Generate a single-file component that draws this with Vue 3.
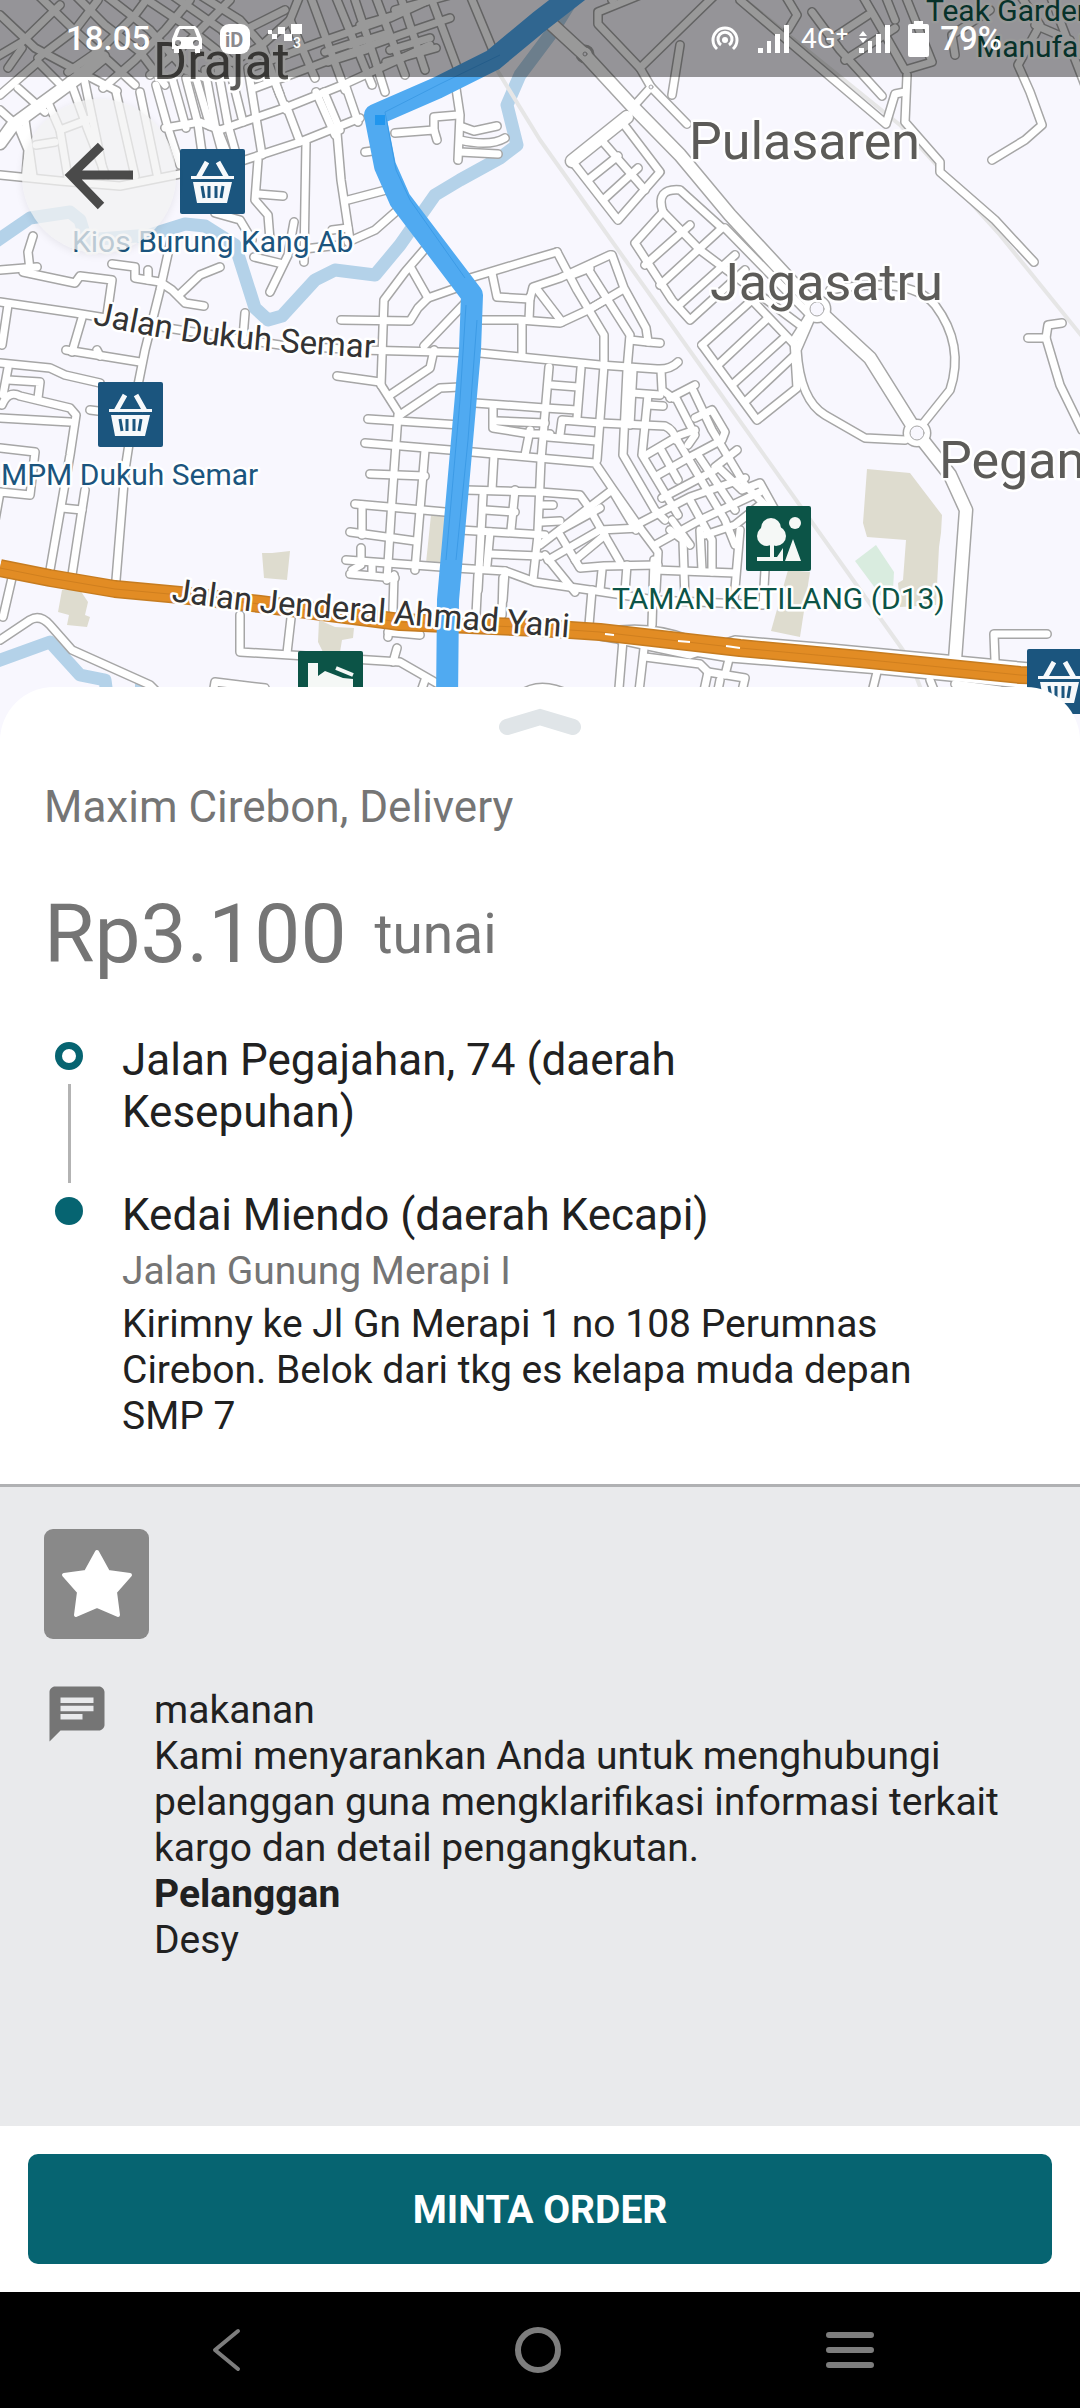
<script setup>
// Street centre lines, drawn once as a grey casing and once as a white fill.
const streets = [
  'M0 15L35 48L80 72L117 91', 'M38 -5L72 28L110 62L135 85', 'M75 -5L105 25L140 52L165 85',
  'M105 -5L150 30L185 70L205 78', 'M140 -5L185 25L232 62', 'M172 -5L222 30L245 55', 'M200 -5L240 20L262 45',
  'M-5 58L22 42L60 5', 'M38 58L75 30L98 0', 'M68 72L100 50L135 15L150 -5', 'M103 88L135 60L165 30L190 0',
  'M8 68L22 48', 'M0 95L38 62', 'M0 110L20 128', 'M18 88L45 112', 'M38 62L62 86', 'M150 75L190 40L230 0',
  'M232 62L262 45L290 20L300 -5', 'M255 88L330 60L400 35L450 18', 'M250 68L320 42L390 18L440 -5',
  'M245 30L285 10', 'M262 45L280 95', 'M290 20L315 78', 'M310 -5L345 90', 'M335 -5L372 85', 'M355 0L375 60L385 92',
  'M375 -5L405 75', 'M400 -5L425 70', 'M395 10L450 -5', 'M430 -5L460 75', 'M470 -5L497 60',
  'M325 52L362 40', 'M328 62L366 50', 'M350 45L385 34', 'M390 50L430 38', 'M386 62L436 48', 'M360 25L395 15',
  'M47 100L60 130L68 178', 'M70 80L88 130L106 176', 'M84 78L104 175', 'M60 130L92 118', 'M36 145L55 142', 'M116 92L135 176',
  'M140 92L157 174', 'M18 126L28 150L26 176', 'M25 120L33 176', 'M156 85L168 128L180 165',
  'M172 78L186 128', 'M186 78L198 124L203 160', 'M196 78L210 126', 'M205 70L216 130L222 152', 'M218 70L228 125L235 150',
  'M230 70L243 122', 'M248 68L262 155', 'M270 70L286 110', 'M218 130L230 160', 'M286 105L300 142', 'M316 92L335 135', 'M324 92L340 130', 'M345 84L358 122',
  'M0 175L60 181L120 186L175 175L245 160L300 142L360 118', 'M165 128L200 122L220 130L290 106L345 84L380 68L430 45',
  'M337 133L341 180L350 240', 'M306 143L305 200L304 262', 'M258 160L255 200L268 215L270 240', 'M258 194L283 196',
  'M348 200L386 190', 'M294 222L288 255L270 292', 'M254 257L283 264', 'M332 230L348 228', 'M348 242L375 230L400 208',
  'M215 213L240 220L252 240', 'M295 250L340 245', 'M365 152L380 150', 'M33 236L28 252L30 270', 'M0 270L37 267', 'M23 272L75 283L80 276L112 280L106 322',
  'M112 264L135 267L135 278L160 282L172 290L185 303L204 306', 'M180 294L200 275L220 267', 'M171 240L160 290L145 350L138 385L125 470L116 580',
  'M148 270L148 280', 'M0 302L75 313L180 330L280 345L360 350L480 353L600 365L657 369Q670 370 678 362', 'M8 305L2 345', 'M82 318L72 352', 'M66 350L140 362', 'M97 350L100 356', 'M245 313L243 338',
  'M341 320L410 321L418 308L428 298', 'M381 385L384 300L405 272L430 243', 'M411 268L428 298L465 285', 'M424 346L468 300', 'M470 278L540 257L557 252',
  'M395 133L434 130L437 140', 'M434 130L434 117L458 115', 'M454 75L460 115L458 160', 'M460 126L474 131L497 126', 'M460 140Q490 147 505 138', 'M460 152L498 154',
  'M0 363L50 368L65 375L100 383', 'M8 368L3 395', 'M8 380L40 382L38 398', 'M2 405Q8 390 20 396L70 408L76 415L70 455L50 570', 'M0 418L70 422',
  'M0 448L35 452L30 495L0 492L-5 520', 'M85 490L72 575', 'M62 508L82 510', 'M12 578L3 617', 'M90 410L98 411',
  'M0 640L30 620Q40 614 50 625L72 650L150 685L170 705', 'M240 615L240 652L290 655L400 662L440 685', 'M291 618L287 653', 'M397 648L393 662', 'M390 622L388 637', 'M388 632L420 635',
  'M212 700L215 682L265 688', 'M425 680L418 700', 'M520 695Q540 680 570 695', 'M337 376L380 382', 'M381 385L400 415', 'M390 395L430 368L434 350', 'M400 415L440 388L460 387',
  'M398 415L392 500L387 580L394 575L393 610', 'M425 450L415 570', 'M368 419L460 425', 'M365 443L450 450L595 463L612 488L640 528L658 552L656 590', 'M370 474L425 476',
  'M355 504L445 512', 'M350 532L415 541', 'M346 560L455 568', 'M350 574L395 578', 'M362 505L362 535', 'M361 548L361 565L352 570', 'M372 565L372 575',
  'M478 575L476 615', 'M503 578L502 615', 'M492 273L497 297L530 299L533 287L560 278L610 255', 'M478 320L520 320L560 323L588 310L622 290',
  'M530 297L529 320', 'M536 288L562 322', 'M522 323L522 355', 'M557 252L577 290L604 335L604 365L597 460', 'M590 272L630 335L627 370L623 455L655 510L665 520',
  'M612 255L624 288L646 328L648 342L660 343', 'M630 340L648 342', 'M572 275L590 268', 'M588 310L605 300', 'M549 367L541 460L538 530', 'M581 368L577 418', 'M552 385L578 387', 'M475 403L545 408L577 410',
  'M560 435L562 420L600 423L665 426Q674 430 676 440', 'M493 408L493 428L530 434L550 434', 'M497 421L545 423', 'M530 430L525 455', 'M548 437L597 441',
  'M633 370L630 425', 'M648 395L642 455L678 515', 'M661 370L662 390L673 398', 'M670 398L695 385', 'M632 393L660 395', 'M648 405L663 406', 'M676 398L695 435L688 445',
  'M693 390L712 430L745 485L770 510', 'M695 418L712 410L725 432L722 440L690 457L658 475', 'M646 455L680 435L695 430', 'M660 448L678 480', 'M676 438L725 520L735 545', 'M698 455L735 510', 'M715 467L737 450', 'M718 467L742 490L760 483L775 510',
  'M636 525L690 497L745 478', 'M662 498L715 470', 'M548 560L600 530L640 528', 'M655 545L700 520L760 492', 'M690 500L712 540L712 572', 'M672 520L690 545', 'M705 535L735 525L760 505',
  'M465 490L540 492L580 495L593 513', 'M483 495L478 590', 'M515 490L511 530', 'M460 530L545 535', 'M494 455L492 490', 'M485 510L515 512', 'M490 532L487 565', 'M490 554L540 556',
  'M455 568L505 571L535 582L590 590L655 600L763 605L765 570', 'M505 571L503 600', 'M538 535L533 580', 'M540 545L612 490', 'M545 555L575 592', 'M560 535L580 568L604 566L658 565',
  'M590 510L620 562', 'M575 560L605 535', 'M612 490L636 530', 'M542 505L553 505', 'M542 522L560 521', 'M592 590L589 625', 'M654 560L652 625', 'M655 570L735 573', 'M740 530L734 600',
  'M670 530L683 540L685 600', 'M700 530L702 570', 'M602 570L600 590', 'M627 565L625 592', 'M560 530L600 508',
  'M640 -5L598 12L598 24L640 68L651 87L687 124', 'M715 -5L640 68', 'M612 0L640 -20', 'M680 45L672 95', 'M651 87L633 107', 'M572 161L618 220L660 172L622 122',
  'M588 180L618 156', 'M603 200L638 168', 'M604 143L645 190', 'M663 212Q655 188 680 190L722 228', 'M663 212L635 243L672 300L690 320L745 270', 'M645 265L690 225', 'M660 285L722 228', 'M678 306L735 255', 'M663 212L700 250L800 325',
  'M725 228L810 315', 'M702 345L752 300L795 345', 'M702 345L757 420L797 388L794 340L808 318', 'M718 365L768 318', 'M732 385L785 337', 'M745 402L795 355',
  'M810 320L797 350Q800 400 825 415L865 438L905 440', 'M830 290Q910 275 935 305Q965 345 950 390L922 425', 'M785 -5L797 15L788 30', 'M812 12L840 50L882 96', 'M845 60L895 28', 'M830 40L868 15',
  'M862 -5L888 40L905 70L932 62L905 -5', 'M885 -5L895 20', 'M740 0L820 68L886 124L895 94L905 92', 'M907 75L905 122L940 162L940 172L995 220L1034 262', 'M1020 -5L1040 25L1018 65L1030 92L1042 125L1025 140L992 160',
  'M1035 25L1070 40', 'M1050 -5L1085 85', 'M955 55L952 35L990 10', 'M1028 338L1046 338L1048 325L1062 323', 'M1046 338L1060 385L1082 430',
  'M995 660L994 634L1047 634', 'M623 640L618 700', 'M645 640L638 700', 'M645 657L700 664L708 672L745 678L740 700', 'M730 655L725 675', 'M708 672L702 700', 'M720 680L716 700', 'M877 672L870 700', 'M930 680L938 700', 'M955 684L1000 690',
  'M605 632Q650 624 690 640', 'M620 640L690 655L735 640L830 648L1030 667', 'M600 636L730 658L880 670L1080 690'
]
const avenues = [
  'M547 20L585 55L633 107L680 155L730 215L817 309L870 358L917 433L950 475L966 510L955 660',
  'M627 117L572 161', 'M0 143L13 125L43 103L80 76L103 57'
]
const roundabouts = [[817, 309, 7], [917, 433, 7], [585, 54, 2], [651, 87, 2]]
const parks = [
  ['867,469 910,473 942,515 941,533 939,547 936,605 900,607 898,583 903,580 906,540 867,537 863,523', '#dedccf'],
  ['876,545 894,572 893,590 884,600 855,561', '#d9ecdf'],
  ['788,570 810,572 800,637 771,631', '#dedccf'],
  ['262,553 272,553 290,551 287,580 264,578', '#dedccf'],
  ['62,590 80,590 88,602 85,615 90,617 87,627 67,625 69,615 58,612', '#dedccf'],
  ['319,620 335,627 354,628 353,638 342,640 340,652 323,652 318,642', '#dedccf'],
  ['431,515 445,515 443,564 426,563', '#dedccf']
]
const shops = [[180, 149], [98, 382], [1027, 649]]
const districts = [
  ['Drajat', 153, 79], ['Pulasaren', 689, 159], ['Jagasatru', 710, 300], ['Pegambiran', 939, 478]
]
const stops = [
  { title: 'Jalan Pegajahan, 74 (daerah Kesepuhan)', start: true },
  {
    title: 'Kedai Miendo (daerah Kecapi)',
    street: 'Jalan Gunung Merapi I',
    note: 'Kirimny ke Jl Gn Merapi 1 no 108 Perumnas Cirebon. Belok dari tkg es kelapa muda depan SMP 7'
  }
]
</script>

<template>
  <div class="screen">
    <header class="map">
      <svg class="map-canvas" viewBox="0 0 1080 745" preserveAspectRatio="xMidYMin slice" role="img" aria-label="Peta rute">
        <defs>
          <g id="basket">
            <rect width="65" height="65" rx="2" fill="#1b557e" />
            <path d="M18 29L27 13M47 29L38 13" stroke="#f7f9fb" stroke-width="5" fill="none" />
            <path d="M11 27H54V30H11ZM13 33H52L47 54H17Z" fill="#f7f9fb" />
            <path d="M22 37L24 49M29 37V49M36 37V49M43 37L41 49" stroke="#1b557e" stroke-width="3" />
          </g>
          <path id="line-semar" d="M92 324Q160 339 220 346T395 359" />
          <path id="line-yani" d="M171 601Q240 611 300 616T590 639" />
        </defs>
        <rect width="1080" height="745" fill="#f8f7fe" />
        <polygon v-for="(p, i) in parks" :key="'p' + i" :points="p[0]" :fill="p[1]" />
        <g fill="none" stroke-linejoin="round">
          <path class="river" d="M-5 242L30 218L70 212L80 220L86 240L150 235L185 224L205 226L235 245L255 308L268 320L282 316L315 280L335 270L375 275L400 245L435 195L460 180L500 158L517 145L507 105L520 75L550 35L575 -5M-5 662L50 642L80 675L105 680L107 695M135 690H150" />
          <path class="rail" d="M497 70L540 140L700 365L910 660L925 700M745 0L900 125L1000 235L1085 340" />
          <g stroke-linecap="round">
            <path v-for="(d, i) in streets" :key="'c' + i" :d="d" class="casing" />
            <path v-for="(d, i) in avenues" :key="'d' + i" :d="d" class="casing wide" />
            <circle cx="817" cy="309" r="13" class="ring-casing" />
            <circle cx="917" cy="433" r="13" class="ring-casing" />
            <circle cx="585" cy="54" r="8" class="ring-casing" />
            <path v-for="(d, i) in streets" :key="'s' + i" :d="d" class="street" />
            <path v-for="(d, i) in avenues" :key="'a' + i" :d="d" class="street wide" />
            <circle cx="817" cy="309" r="13" fill="#fff" />
            <circle cx="917" cy="433" r="13" fill="#fff" />
            <circle v-for="(r, i) in roundabouts" :key="'r' + i" :cx="r[0]" :cy="r[1]" :r="r[2]" class="island" />
          </g>
          <path class="highway-edge" d="M0 568L50 578L115 589L180 595L260 604L400 622L540 628L600 632L740 648L860 659L1020 675L1080 677" />
          <path class="highway" d="M0 568L50 578L115 589L180 595L260 604L400 622L540 628L600 632L740 648L860 659L1020 675L1080 677" />
          <path class="highway-line" d="M0 568L50 578L115 589L180 595L260 604L400 622L540 628L600 632L740 648L860 659L1020 675L1080 677" />
          <path d="M605 634L614 635M678 641L690 642M726 646L740 648" stroke="#fff" stroke-width="2" />
          <path class="route" d="M580 -10L540 21L493 60L437 88L375 115L385 166L400 200L472 295L470 350L448 600L447 700" />
          <path class="route-trace" d="M500 55L440 84L385 112L396 170L410 200L465 278M466 305L460 400L446 560M477 320L468 440L456 560" />
          <path d="M375 115h10v10h-10z" fill="#2196ee" />
        </g>
        <use v-for="(s, i) in shops" :key="'b' + i" href="#basket" :x="s[0]" :y="s[1]" />
        <g transform="translate(746 506)">
          <rect width="65" height="65" rx="2" fill="#0c5447" />
          <circle cx="25" cy="22" r="10" fill="#f5f8f6" />
          <circle cx="21" cy="30" r="10" fill="#f5f8f6" />
          <circle cx="30" cy="30" r="10" fill="#f5f8f6" />
          <path d="M24 36H28V51H31L37 42V55H11V51H24ZM47 33L55 55H39Z" fill="#f5f8f6" />
          <circle cx="49" cy="17" r="6" fill="#f5f8f6" />
        </g>
        <g transform="translate(298 651)">
          <rect width="65" height="65" rx="2" fill="#0c5447" />
          <path d="M10 12H20V25L27 20L45 27L55 28V45H10Z" fill="#f5f8f6" />
          <path d="M38 17L55 24" stroke="#f5f8f6" stroke-width="4" />
        </g>
        <g class="labels">
          <text v-for="d in districts" :key="d[0]" :x="d[1]" :y="d[2]" class="district">{{ d[0] }}</text>
          <text x="72" y="252" class="shop">Kios Burung Kang Ab</text>
          <text x="1" y="485" class="shop">MPM Dukuh Semar</text>
          <text x="612" y="609" class="park">TAMAN KETILANG (D13)</text>
          <text x="926" y="21" class="park">Teak Garden</text>
          <text x="976" y="57" class="park">Manufaktur</text>
          <text class="road"><textPath href="#line-semar">Jalan Dukuh Semar</textPath></text>
          <text class="road"><textPath href="#line-yani">Jalan Jenderal Ahmad Yani</textPath></text>
        </g>
      </svg>

      <div class="status">
        <div class="status-group">
          <span>18.05</span>
          <svg class="car" width="30" height="28" viewBox="0 0 30 28">
            <path fill="#fff" fill-rule="evenodd" d="M7 1H23L26 4L30 14V24H28V28H23V24H7V28H2V24H0V14L4 4ZM8 4L5 12H25L22 4ZM6 15A3 3 0 1 0 6 21A3 3 0 1 0 6 15ZM24 15A3 3 0 1 0 24 21A3 3 0 1 0 24 15Z" />
          </svg>
          <svg width="30" height="30" viewBox="0 0 30 30">
            <rect width="30" height="30" rx="9" fill="#fff" />
            <text x="5" y="23" class="badge-text">iD</text>
          </svg>
          <svg width="36" height="30" viewBox="0 0 36 30">
            <path fill="#fff" d="M0 6H4V10H0ZM4 10H9V15H4ZM10 3H17V10H10ZM16 10H24V17H16ZM23 0H34V10H23Z" />
            <text x="25" y="24" class="count">3</text>
          </svg>
        </div>
        <div class="status-group right">
          <svg class="spot" width="28" height="28" viewBox="0 0 28 28" fill="none" stroke="#fff" stroke-width="3">
            <path d="M6 24A12 12 0 1 1 22 24M10 20A7 7 0 1 1 18 20" />
            <circle cx="14" cy="15" r="3" fill="#fff" stroke="none" />
          </svg>
          <svg width="32" height="28" viewBox="0 0 32 28"><path fill="#fff" d="M0 23H5V28H0ZM9 16H13V28H9ZM17 9H22V28H17ZM26 0H31V28H26Z" /></svg>
          <span class="net">4G<sup>+</sup></span>
          <svg width="32" height="28" viewBox="0 0 32 28"><path fill="#fff" d="M0 23H5V28H0ZM9 16H13V28H9ZM17 9H22V28H17ZM26 0H31V28H26ZM0 11L4 6L8 11ZM0 13H8L4 18Z" /></svg>
          <svg class="battery" width="21" height="36" viewBox="0 0 21 36"><path fill="#fff" fill-rule="evenodd" d="M6 0H15V3H19Q21 3 21 5V34Q21 36 19 36H2Q0 36 0 34V5Q0 3 2 3H6ZM4 8V12H17V8Z" /></svg>
          <span>79%</span>
        </div>
      </div>

      <button class="back" type="button" aria-label="Kembali">
        <svg width="72" height="72" viewBox="0 0 72 72" fill="none" stroke="#4a4a4a" stroke-width="9">
          <path d="M7 35H70M38 6L8 35L38 66" />
        </svg>
      </button>
    </header>

    <main class="sheet">
      <button class="handle" type="button" aria-label="Perluas">
        <svg width="84" height="28" viewBox="0 0 84 28" fill="none" stroke="#e0e5e8" stroke-width="16" stroke-linecap="round">
          <path d="M9 19L42 9L75 19" />
        </svg>
      </button>
      <p class="service">Maxim Cirebon, Delivery</p>
      <p class="price"><strong>Rp3.100</strong><span>tunai</span></p>
      <ol class="stops">
        <li v-for="s in stops" :key="s.title">
          <div class="track">
            <i class="dot" :class="{ open: s.start }"></i>
            <i v-if="s.start" class="leg"></i>
          </div>
          <div class="stop">
            <p class="title">{{ s.title }}</p>
            <p v-if="s.street" class="street-name">{{ s.street }}</p>
            <p v-if="s.note" class="note">{{ s.note }}</p>
          </div>
        </li>
      </ol>
    </main>

    <section class="details">
      <div class="star">
        <svg width="72" height="70" viewBox="0 0 72 70">
          <path d="M36 3L47 23L69 26L54 43L57 66L36 57L15 66L18 43L3 26L25 23Z" fill="#fff" stroke="#fff" stroke-width="4" stroke-linejoin="round" />
        </svg>
      </div>
      <div class="message">
        <svg width="66" height="66" viewBox="0 0 24 24">
          <path fill="#757575" d="M20 2H4C3 2 2 3 2 4V22L6 18H20C21 18 22 17 22 16V4C22 3 21 2 20 2ZM6 6H18V8H6ZM14 14H6V12H14ZM18 11H6V9H18Z" />
        </svg>
        <div class="message-text">
          <p>makanan</p>
          <p>Kami menyarankan Anda untuk menghubungi pelanggan guna mengklarifikasi informasi terkait kargo dan detail pengangkutan.</p>
          <p><b>Pelanggan</b></p>
          <p>Desy</p>
        </div>
      </div>
    </section>

    <div class="action"><button class="order" type="button">MINTA ORDER</button></div>

    <nav class="system">
      <button type="button" aria-label="Kembali">
        <svg width="48" height="48" viewBox="0 0 48 48"><path d="M36 5L13 24L36 43" /></svg>
      </button>
      <button type="button" aria-label="Beranda">
        <svg width="48" height="48" viewBox="0 0 48 48"><circle cx="24" cy="24" r="20" /></svg>
      </button>
      <button type="button" aria-label="Terbaru">
        <svg width="48" height="48" viewBox="0 0 48 48"><path d="M3 9H45M3 24H45M3 39H45" /></svg>
      </button>
    </nav>
  </div>
</template>

<style>
body { margin: 0; background: #fff; }
</style>

<style scoped>
.screen { min-height: 100vh; display: flex; flex-direction: column; font-family: Roboto, "Noto Sans", sans-serif; color: #212121; }
p, ol { margin: 0; padding: 0; }
button { border: 0; padding: 0; background: none; font: inherit; }
svg { display: block; flex: none; }

.map { position: relative; }
.map-canvas { width: 100%; height: 745px; }
.river { stroke: #b4d2e9; stroke-width: 13; }
.rail { stroke: #e6e6e6; stroke-width: 4; }
.casing { stroke: #a6a6a6; stroke-width: 10; }
.casing.wide { stroke-width: 15; }
.street { stroke: #fff; stroke-width: 7; }
.street.wide { stroke-width: 12; }
.ring-casing { fill: #fff; stroke: #a6a6a6; stroke-width: 3; }
.island { fill: #f8f7fe; stroke: #a6a6a6; stroke-width: 1; }
.highway-edge { stroke: #c67c20; stroke-width: 18; }
.highway { stroke: #e28c24; stroke-width: 15; }
.highway-line { stroke: #d07f1e; stroke-width: 1; }
.route { stroke: #50aaf1; stroke-width: 22; }
.route-trace { stroke: #3c9be6; stroke-width: 1; }
.labels text { stroke: #fff; stroke-width: 5px; stroke-linejoin: round; paint-order: stroke; }
.labels .district { font-size: 52px; fill: #5c5b58; }
.labels .shop { font-size: 30px; fill: #1b557e; }
.labels .park { font-size: 30px; fill: #0c5447; }
.labels .road { font-size: 33px; fill: #333; }

.status { position: absolute; inset: 0 0 auto 0; height: 77px; display: flex; justify-content: space-between; align-items: center; padding: 0 78px 0 66px; box-sizing: border-box; background: rgba(0, 0, 0, .4); color: #fff; font-size: 33px; font-weight: 500; line-height: 40px; }
.status-group { display: flex; align-items: center; gap: 18px; }
.status-group.right { gap: 11px; }
.car { margin-left: 4px; }
.spot { margin-right: 8px; }
.net { font-size: 28px; font-weight: 400; }
.net sup { font-size: 22px; line-height: 0; vertical-align: 6px; }
.battery { margin-left: 6px; }
.badge-text { font-size: 20px; font-weight: 700; fill: #8b8a8e; }
.count { font-size: 14px; fill: #fff; }

.back { position: absolute; left: 22px; top: 99px; width: 154px; height: 154px; border-radius: 50%; display: grid; place-items: center; background: rgba(241, 241, 242, .75); box-shadow: 0 2px 8px rgba(0, 0, 0, .08); }

.sheet { position: relative; margin-top: -58px; padding: 21px 44px 45px; background: #fff; border-radius: 54px 54px 0 0; display: flex; flex-direction: column; }
.handle { align-self: center; margin-bottom: 45px; }
.service { font-size: 44px; line-height: 52px; color: #757575; }
.price { display: flex; align-items: center; gap: 28px; margin: 52px 0 51px; color: #757575; font-size: 55px; line-height: 62px; }
.price strong { font-size: 82px; line-height: 98px; font-weight: 400; }
.stops { list-style: none; display: flex; flex-direction: column; }
.stops li { display: flex; gap: 28px; }
.stops li:first-child .stop { padding-bottom: 51px; }
.track { width: 50px; padding: 8px 0 6px; display: flex; flex-direction: column; align-items: center; gap: 14px; box-sizing: border-box; }
.dot { width: 28px; height: 28px; border-radius: 50%; background: #066471; box-sizing: border-box; }
.dot.open { background: #fff; border: 7px solid #066471; }
.leg { flex: 1; width: 3px; background: #b3b3b3; }
.stop { flex: 1; max-width: 800px; }
.title { font-size: 44px; line-height: 52px; max-width: 760px; }
.street-name { margin: 7px 0; font-size: 39px; line-height: 46px; color: #757575; }
.note { font-size: 39px; line-height: 46px; }

.details { flex: 1; padding: 42px 44px; background: #e9eaec; border-top: 3px solid #b0b1b3; }
.star { width: 105px; height: 110px; border-radius: 9px; background: #898989; display: grid; place-items: center; }
.message { display: flex; gap: 44px; margin-top: 42px; }
.message-text { padding-top: 6px; font-size: 39px; line-height: 46px; }

.action { padding: 28px; background: #fff; }
.order { display: block; width: 100%; height: 110px; padding-top: 2px; border-radius: 10px; background: #066471; color: #fff; font-size: 39px; font-weight: 700; }

.system { display: flex; height: 116px; padding: 0 74px 0 70px; background: #000; }
.system button { flex: 1; display: grid; place-items: center; }
.system svg { fill: none; stroke: #7d7d7d; stroke-width: 6; stroke-linecap: round; stroke-linejoin: round; }
.system button:first-child svg { stroke-width: 4; }
</style>
